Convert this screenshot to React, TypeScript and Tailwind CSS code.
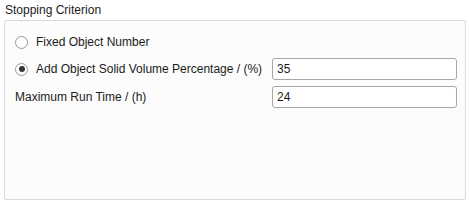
import { useState } from "react";

function Radio({ checked }: { checked: boolean }) {
  return (
    <span className="flex h-[13px] w-[13px] shrink-0 items-center justify-center rounded-full border border-[#9a9a9a] bg-white">
      {checked && <span className="h-[6px] w-[6px] rounded-full bg-[#333333]" />}
    </span>
  );
}

export default function App() {
  const [mode, setMode] = useState<"fixed" | "volume">("volume");
  const [volume, setVolume] = useState("35");
  const [runTime, setRunTime] = useState("24");

  return (
    <div
      className="h-[205px] w-[469px] bg-white text-[12px] text-[#1b1b1b]"
      style={{ fontFamily: '"Liberation Sans", Arial, sans-serif' }}
    >
      <div className="pl-[5px] pt-[3px] leading-[15px]">Stopping Criterion</div>
      <div className="ml-[4px] mt-[2px] h-[180px] w-[462px] rounded-[2px] border border-[#dadada] bg-[#fcfcfc] pl-[10px] pr-[8px] pt-[11px]">
        <div className="flex h-[20px] items-center gap-[8px]" onClick={() => setMode("fixed")}>
          <Radio checked={mode === "fixed"} />
          <span>Fixed Object Number</span>
        </div>
        <div className="mt-[6px] flex h-[22px] items-center">
          <div className="flex flex-1 items-center gap-[8px]" onClick={() => setMode("volume")}>
            <Radio checked={mode === "volume"} />
            <span>Add Object Solid Volume Percentage / (%)</span>
          </div>
          <input
            value={volume}
            onChange={(e) => setVolume(e.target.value)}
            className="h-[22px] w-[185px] rounded-[3px] border border-[#a6a6a6] bg-white px-[4px] outline-none"
          />
        </div>
        <div className="mt-[6px] flex h-[22px] items-center">
          <span className="flex-1">Maximum Run Time / (h)</span>
          <input
            value={runTime}
            onChange={(e) => setRunTime(e.target.value)}
            className="h-[22px] w-[185px] rounded-[3px] border border-[#a6a6a6] bg-white px-[4px] outline-none"
          />
        </div>
      </div>
    </div>
  );
}
